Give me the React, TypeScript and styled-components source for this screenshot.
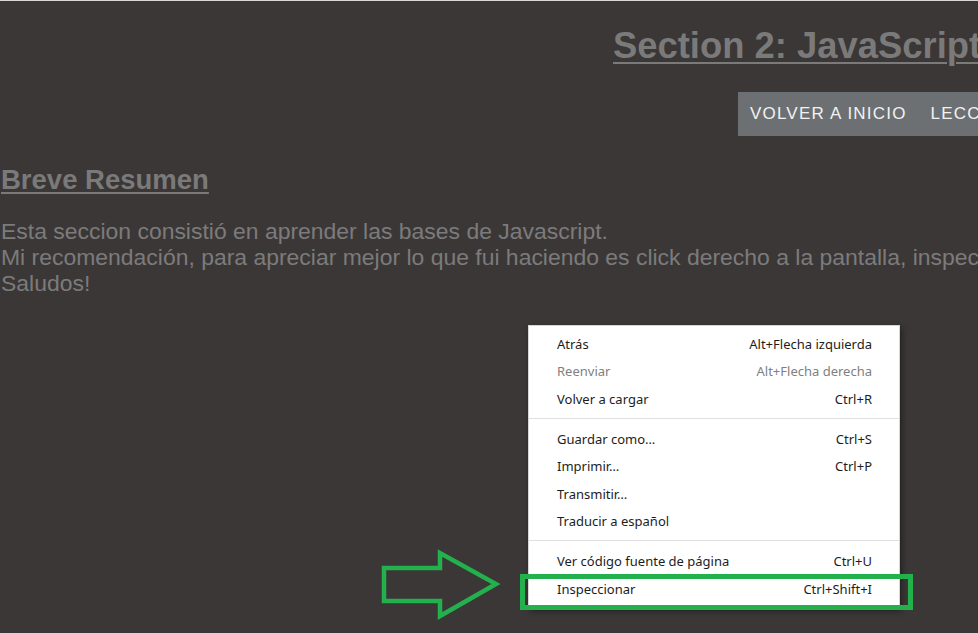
import React from "react";
import styled, { createGlobalStyle } from "styled-components";

const Global = createGlobalStyle`
  html, body { margin: 0; padding: 0; }
  body { background: #3b3736; overflow: hidden; }
`;

const Page = styled.div`
  position: relative;
  width: 978px;
  height: 633px;
  box-sizing: border-box;
  border-top: 1px solid #d8d8d8;
  background: #3b3736;
  overflow: hidden;
  font-family: "Liberation Sans", Arial, sans-serif;
  color: #7b7b7c;
`;

const Header = styled.header`
  display: flex;
  flex-direction: column;
  align-items: flex-start;
  padding-top: 24px;
`;

const Title = styled.h1`
  margin: 0 0 0 613px;
  font-size: 36.4px;
  line-height: 42px;
  font-weight: bold;
  text-decoration: underline;
  text-decoration-thickness: 2px;
  text-underline-offset: 4px;
  white-space: nowrap;
  color: #7a7a7a;
`;

const Nav = styled.nav`
  display: flex;
  align-items: center;
  gap: 24px;
  margin: 25px 0 0 738px;
  height: 44px;
  padding-left: 12px;
  background: #6c7073;
  white-space: nowrap;
`;

const NavLink = styled.span`
  font-size: 17px;
  letter-spacing: 1.2px;
  color: #f2f2f2;
`;

const Content = styled.section`
  padding: 28px 0 0 1px;
`;

const SubTitle = styled.h2`
  margin: 0;
  font-size: 27.5px;
  line-height: 31px;
  font-weight: bold;
  text-decoration: underline;
  text-decoration-thickness: 2px;
  text-underline-offset: 3px;
  color: #7a7a7a;
`;

const Para = styled.p`
  margin: 23px 0 0;
  font-size: 22.95px;
  line-height: 26.1px;
  white-space: nowrap;
`;

const Menu = styled.div`
  position: absolute;
  left: 528px;
  top: 324px;
  width: 372px;
  box-sizing: border-box;
  padding: 4px 0;
  background: #ffffff;
  border: 1px solid #d6d6d6;
  box-shadow: 2px 3px 6px rgba(0, 0, 0, 0.45);
  font-family: "Noto Sans", "Open Sans", sans-serif;
  font-size: 13px;
`;

const Item = styled.div<{ $disabled?: boolean }>`
  display: flex;
  align-items: center;
  justify-content: space-between;
  height: 27.5px;
  padding: 0 27px 0 28px;
  color: ${(p) => (p.$disabled ? "#7f7f7f" : "#1d1d1d")};
`;

const Shortcut = styled.span``;

const Separator = styled.div`
  height: 1px;
  margin: 5px 0 6.5px;
  background: #e0e0e0;
`;

const Highlight = styled.div`
  position: absolute;
  left: 520px;
  top: 573px;
  width: 393px;
  height: 36px;
  box-sizing: border-box;
  border: 5px solid #22b14c;
`;

const ArrowSvg = styled.svg`
  position: absolute;
  left: 370px;
  top: 540px;
`;

type Entry = { label: string; sc?: string; disabled?: boolean } | "sep";

const entries: Entry[] = [
  { label: "Atrás", sc: "Alt+Flecha izquierda" },
  { label: "Reenviar", sc: "Alt+Flecha derecha", disabled: true },
  { label: "Volver a cargar", sc: "Ctrl+R" },
  "sep",
  { label: "Guardar como…", sc: "Ctrl+S" },
  { label: "Imprimir…", sc: "Ctrl+P" },
  { label: "Transmitir…" },
  { label: "Traducir a español" },
  "sep",
  { label: "Ver código fuente de página", sc: "Ctrl+U" },
  { label: "Inspeccionar", sc: "Ctrl+Shift+I" },
];

export default function App() {
  return (
    <>
      <Global />
      <Page>
        <Header>
          <Title>Section 2: JavaScript Basics</Title>
          <Nav>
            <NavLink>VOLVER A INICIO</NavLink>
            <NavLink>LECCIONES</NavLink>
          </Nav>
        </Header>
        <Content>
          <SubTitle>Breve Resumen</SubTitle>
          <Para>
            Esta seccion consistió en aprender las bases de Javascript.
            <br />
            Mi recomendación, para apreciar mejor lo que fui haciendo es click derecho a la pantalla, inspeccionar y ver la consola.
            <br />
            Saludos!
          </Para>
        </Content>
        <Menu>
          {entries.map((e, i) =>
            e === "sep" ? (
              <Separator key={i} />
            ) : (
              <Item key={i} $disabled={e.disabled}>
                <span>{e.label}</span>
                {e.sc && <Shortcut>{e.sc}</Shortcut>}
              </Item>
            )
          )}
        </Menu>
        <Highlight />
        <ArrowSvg width="140" height="85" viewBox="0 0 140 85">
          <polygon
            points="14,27 70,27 70,12 126,43 70,75 70,60 14,60"
            fill="none"
            stroke="#22b14c"
            strokeWidth="4.5"
            strokeLinejoin="miter"
          />
        </ArrowSvg>
      </Page>
    </>
  );
}
